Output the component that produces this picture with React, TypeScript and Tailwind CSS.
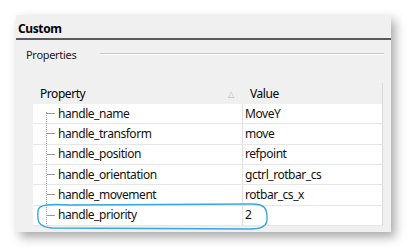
import React from 'react';

const rows = [
  { name: 'handle_name', value: 'MoveY' },
  { name: 'handle_transform', value: 'move' },
  { name: 'handle_position', value: 'refpoint' },
  { name: 'handle_orientation', value: 'gctrl_rotbar_cs' },
  { name: 'handle_movement', value: 'rotbar_cs_x' },
  { name: 'handle_priority', value: '2' },
];

const App: React.FC = () => {
  return (
    <div
      className="relative w-[408px] h-[250px] bg-white pt-[15px] pl-[16px] overflow-hidden"
      style={{ fontFamily: '"Noto Sans", "Open Sans", sans-serif' }}
    >
      {/* Window panel */}
      <div className="w-[375px] h-[217px] bg-[#f0f0f0] shadow-[4px_5px_10px_rgba(0,0,0,0.35)] flex flex-col">
        {/* Title */}
        <div className="h-[23px] flex items-end pl-[2px] pb-[3px] text-[12px] font-bold text-black leading-none tracking-[-0.4px]">
          Custom
        </div>
        <div className="h-[2px] bg-[#5a5a5a]" />

        {/* Group label */}
        <div className="h-[20px] mt-[4px] flex items-center pl-[10px] pr-[7px]">
          <span className="text-[11px] text-[#222] leading-none tracking-[-0.3px]">Properties</span>
          <div className="flex-1 ml-[24px] border-t border-[#c8c8c8] border-b border-b-white h-[2px]" />
        </div>

        {/* Property grid */}
        <div className="ml-[17px] mt-[19px] w-[350px] flex flex-col tracking-[-0.45px]">
          {/* Header */}
          <div className="h-[21px] flex items-center text-[12px] text-black">
            <div className="w-[210px] relative flex items-center pl-[7px]">
              Property
              <span className="absolute left-[195px] top-[3px] text-[8px] text-[#b0b0b0]">△</span>
            </div>
            <div className="flex-1 pl-[7px] h-full flex items-center border-r border-[#dcdcdc]">Value</div>
          </div>

          {/* Rows */}
          <div className="relative bg-white border-r border-[#dcdcdc]">
            {/* dotted tree line */}
            <div className="absolute left-[13px] top-[8px] h-[112px] border-l border-dotted border-[#9a9a9a]" />
            {rows.map((r) => (
              <div key={r.name} className="h-[20.33px] flex border-b border-[#e6e6e6] text-[12px] text-[#111]">
                <div className="w-[210px] flex items-center border-r border-[#e0e0e0]">
                  <div className="w-[8px] ml-[14px] border-t border-[#9a9a9a]" />
                  <span className="ml-[3px] leading-none">{r.name}</span>
                </div>
                <div className="flex-1 flex items-center pl-[2px] leading-none">{r.value}</div>
              </div>
            ))}
          </div>
        </div>
      </div>

      {/* Hand drawn highlight */}
      <svg className="absolute left-0 top-0 pointer-events-none" width="408" height="250">
        <path
          d="M 70 205 C 50 204, 38 204, 38 211 C 37 221, 38 227, 52 228 L 250 229 C 262 229, 268 226, 267 217 C 267 208, 264 204, 252 204 L 70 205"
          fill="none"
          stroke="#3aa7de"
          strokeWidth="1.4"
        />
      </svg>
    </div>
  );
};

export default App;
